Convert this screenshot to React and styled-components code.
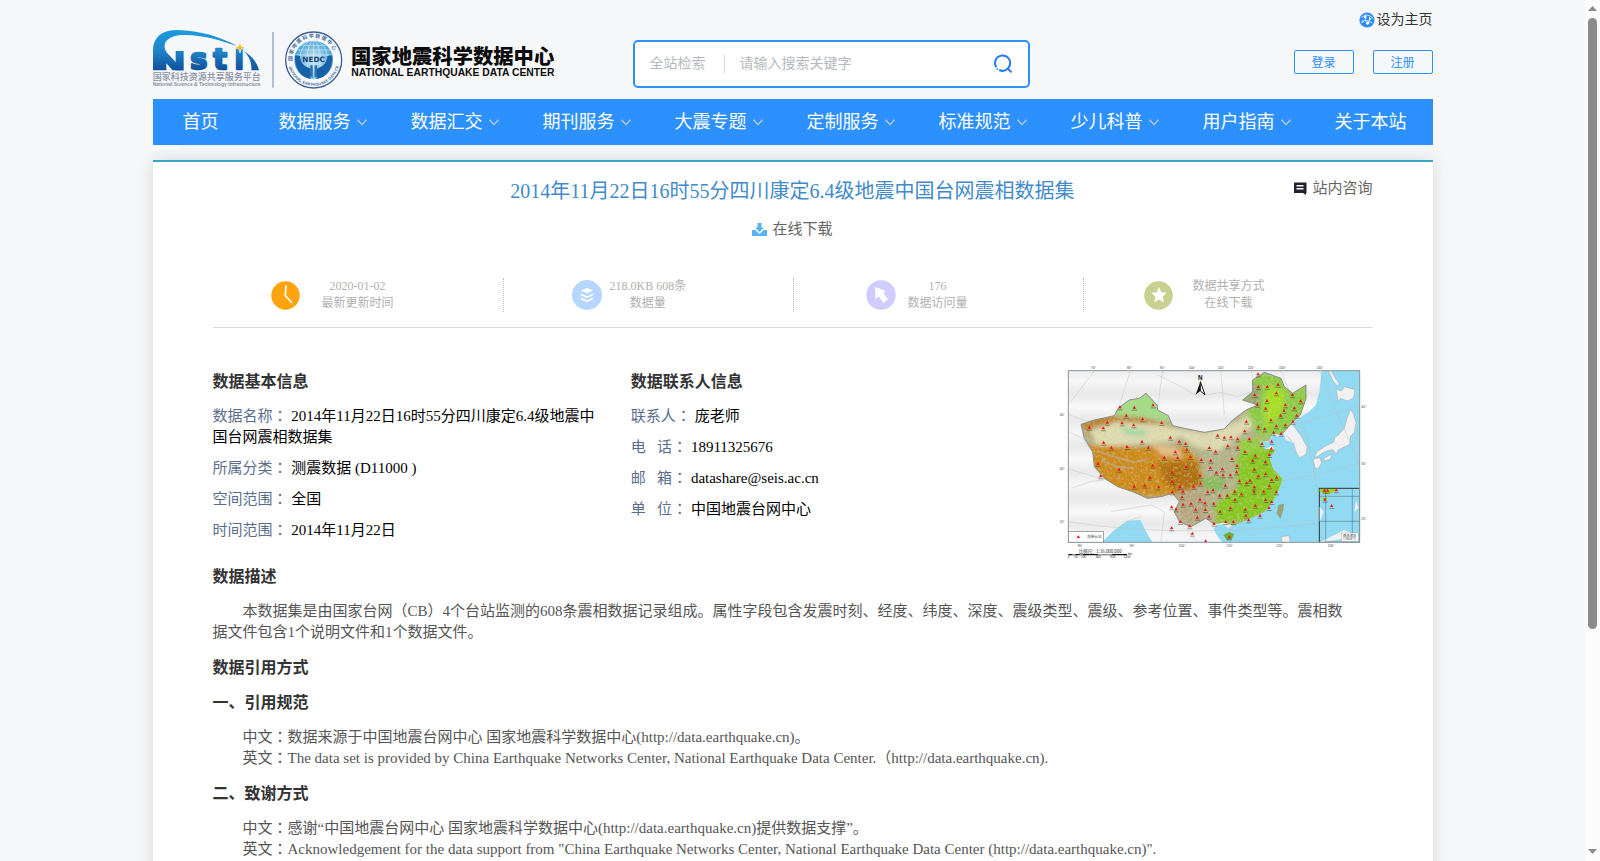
import React from 'react';
import styled, { createGlobalStyle } from 'styled-components';

const GlobalStyle = createGlobalStyle`
  * {
    box-sizing: border-box;
  }

  body {
    margin: 0;
    font-family: "Liberation Serif", "Noto Sans CJK SC", serif;
    font-size: 15px;
    line-height: 21px;
    color: #555;
    background-color: #f6f7f9;
  }
`;

const Page = styled.div`
  display: flex;
  height: 100vh;
  overflow: hidden;
`;

const Scroller = styled.div`
  flex: 1;
  overflow: hidden;
`;

const Container = styled.div`
  max-width: 1280px;
  margin: 0 auto;
`;

const ScrollBar = styled.div`
  width: 15px;
  padding: 0 3px;
  display: flex;
  flex-direction: column;
  align-items: center;
  background-color: #fcfcfc;
`;

const ScrollArrow = styled.svg`
  width: 9px;
  height: 18px;
  fill: #8b8b8b;
`;

const ScrollTrack = styled.div`
  flex: 1;
  width: 9px;
`;

const ScrollThumb = styled.div`
  height: 74%;
  border-radius: 5px;
  background-color: #8b8b8b;
`;

const Header = styled.header`
  display: grid;
  grid-template-columns: 480px 397px 1fr;
  align-items: start;
  height: 99px;
`;

const LogoLink = styled.a`
  display: block;
  margin-top: 29px;
`;

const LogoSvg = styled.svg`
  display: block;
  width: 402px;
  height: 60px;
`;

const SearchBox = styled.form`
  display: flex;
  align-items: center;
  height: 48px;
  margin-top: 40px;
  padding: 0 15px;
  border: 2px solid #2d90ff;
  border-radius: 5px;
  background-color: #fff;
`;

const SearchScope = styled.button`
  padding: 0 18px 0 0;
  border: 0;
  border-right: 1px solid #d5d8dc;
  background: none;
  color: #b5b9be;
  font-family: inherit;
  font-size: 14px;
  line-height: 18px;
`;

const SearchInput = styled.input`
  flex: 1;
  min-width: 0;
  padding: 0 15px;
  border: 0;
  outline: 0;
  background: none;
  font-family: inherit;
  font-size: 14px;
  line-height: 18px;

  &::placeholder {
    color: #b5b9be;
  }
`;

const SearchButton = styled.button`
  display: flex;
  padding: 0;
  border: 0;
  background: none;
`;

const UserArea = styled.div`
  display: flex;
  flex-direction: column;
  align-items: flex-end;
  gap: 20px;
  padding-top: 10px;
`;

const HomeLink = styled.a`
  display: flex;
  align-items: center;
  gap: 2px;
  color: #333;
  font-size: 14px;
  line-height: 20px;
  text-decoration: none;
`;

const UserButtons = styled.div`
  display: flex;
  gap: 19px;
`;

const UserButton = styled.button`
  width: 60px;
  height: 24px;
  padding: 0;
  border: 1px solid #2d90ff;
  border-radius: 2px;
  background: none;
  color: #2d90ff;
  font-family: inherit;
  font-size: 12px;
`;

const Nav = styled.nav`
  display: flex;
  height: 46px;
  background-color: #2d90ff;
`;

const NavItem = styled.a`
  display: flex;
  align-items: center;
  flex: none;
  gap: 6px;
  padding: 0 ${(p) => (p.$menu ? 14 : 30)}px 0 30px;
  color: #fff;
  font-size: 18px;
  text-decoration: none;
  white-space: nowrap;
`;

const SubMark = styled.div`
  width: 26px;
  height: 3px;
  margin: 2px 0 10px;
  background-color: #fff;
`;

const Card = styled.main`
  padding: 12px 60px 40px;
  border-top: 2px solid #3aa6c8;
  background-color: #fff;
  box-shadow: 0 0 16px rgba(0, 0, 0, 0.12);
`;

const TitleRow = styled.div`
  display: grid;
  grid-template-columns: 1fr auto 1fr;
`;

const Title = styled.h1`
  grid-column: 2;
  margin: 0;
  color: #428bca;
  font-size: 20px;
  font-weight: 400;
  line-height: 34px;
`;

const IconLink = styled.a`
  display: inline-flex;
  align-items: center;
  gap: 5px;
  color: #666;
  line-height: 28px;
  text-decoration: none;
`;

const AskLink = styled(IconLink)`
  justify-self: end;
  align-self: start;
`;

const DownloadRow = styled.div`
  display: flex;
  justify-content: center;
  margin-top: 7px;
`;

const Stats = styled.div`
  display: grid;
  grid-template-columns: repeat(4, 1fr);
  margin-top: 35px;
  padding-bottom: 15px;
  border-bottom: 1px solid #d9dcdd;
`;

const Stat = styled.div`
  display: flex;
  align-items: center;
  gap: ${(p) => p.$gap}px;
  height: 34px;
  padding-left: ${(p) => p.$left}px;

  & + & {
    border-left: 1px dotted #bbb;
  }
`;

const StatText = styled.div`
  color: #b0b0b0;
  font-size: 12px;
  line-height: 17px;
  text-align: center;
`;

const Info = styled.section`
  display: grid;
  grid-template-columns: 34% 1fr 308px;
  column-gap: 26px;
  margin-top: 37px;
  padding-right: 6px;
`;

const InfoColumn = styled.div`
  padding-top: 6px;
`;

const SectionTitle = styled.h2`
  margin: 0 0 14px;
  color: #333;
  font-size: 16px;
  font-weight: 700;
  line-height: 21px;
`;

const InfoRow = styled.p`
  margin: 0 0 10px;
  color: #000;
`;

const Label = styled.span`
  color: #5a6e8c;
  white-space: pre;
`;

const ColonMark = styled.span`
  font-family: "Noto Sans CJK JP", sans-serif;
  line-height: 1;
`;

const MapSvg = styled.svg`
  display: block;
  width: 308px;
  height: 195px;
`;

const Description = styled.section`
  margin-top: 6px;
`;

const Paragraph = styled.p`
  margin: 0 0 14px;
  text-indent: 2em;
`;

const Colon = () => <ColonMark>：</ColonMark>;

const navItems = [
  { text: '首页' },
  { text: '数据服务', menu: true },
  { text: '数据汇交', menu: true },
  { text: '期刊服务', menu: true },
  { text: '大震专题', menu: true },
  { text: '定制服务', menu: true },
  { text: '标准规范', menu: true },
  { text: '少儿科普', menu: true },
  { text: '用户指南', menu: true },
  { text: '关于本站' },
];

const basicInfo = [
  ['数据名称', '2014年11月22日16时55分四川康定6.4级地震中国台网震相数据集'],
  ['所属分类', '测震数据 (D11000 )'],
  ['空间范围', '全国'],
  ['时间范围', '2014年11月22日'],
];

const contactInfo = [
  ['联系人', '庞老师'],
  ['电   话', '18911325676'],
  ['邮   箱', 'datashare@seis.ac.cn'],
  ['单   位', '中国地震台网中心'],
];

const stations = [
  [621, 57], [622, 95], [649, 95], [681, 88], [611, 119], [676, 114], [724, 119], [648, 137], [619, 148], [749, 138],
  [644, 160], [703, 150], [730, 159], [699, 166], [689, 181], [737, 181], [660, 195], [726, 199], [703, 210], [676, 213],
  [622, 216], [641, 222], [668, 232], [690, 235], [586, 199], [581, 228], [207, 156], [250, 157], [306, 150], [226, 181],
  [169, 202], [115, 217], [157, 219], [213, 204], [248, 210], [275, 192], [332, 203], [158, 262], [181, 277], [228, 275],
  [273, 259], [292, 277], [358, 247], [385, 259], [404, 266], [407, 283], [373, 291], [340, 307], [380, 308], [418, 305],
  [451, 314], [479, 316], [475, 278], [494, 289], [500, 241], [520, 247], [540, 246], [560, 252], [530, 273], [560, 277],
  [595, 252], [582, 290], [543, 311], [558, 332], [613, 301], [605, 316], [643, 321], [655, 299], [661, 280], [662, 259],
  [633, 266], [141, 326], [149, 363], [204, 343], [305, 331], [297, 367], [281, 391], [250, 394], [323, 396], [363, 352],
  [363, 379], [405, 335], [447, 361], [478, 338], [514, 342], [496, 352], [516, 360], [538, 360], [557, 351], [565, 378],
  [587, 384], [597, 376], [610, 343], [622, 363], [644, 357], [662, 374], [677, 367], [655, 393], [610, 396], [609, 409],
  [638, 409], [676, 411], [551, 409], [571, 417], [523, 391], [529, 421], [506, 421], [486, 405], [470, 411], [449, 385],
  [428, 394], [387, 395], [396, 409], [364, 411], [393, 426], [396, 448], [375, 462], [362, 456], [420, 445], [434, 463],
  [447, 433], [462, 444], [463, 464], [488, 445], [507, 469], [538, 459], [552, 433], [583, 463], [613, 451], [644, 434],
  [662, 440], [654, 458], [627, 481], [593, 495], [585, 481], [547, 500], [524, 500], [489, 505], [474, 484], [439, 487],
  [388, 500], [416, 513], [362, 519], [424, 535], [464, 558], [535, 546], [820, 406], [830, 406], [856, 405], [822, 433],
  [842, 452],
];

const Chevron = () => (
  <svg width="10" height="7" viewBox="0 0 10 7" fill="none" stroke="#c3c9d2" strokeWidth="1.3">
    <path d="M0.5 0.7 L5 5.6 L9.5 0.7" />
  </svg>
);

const SearchIcon = () => (
  <svg width="20" height="20" viewBox="0 0 20 20" fill="none" stroke="#1f7bff" strokeWidth="2">
    <path d="M3.2 13.2 A7.6 7.6 0 1 1 15.2 14.2 A7.6 7.6 0 0 1 6.2 16" />
    <path d="M14.6 14.4 L18.6 18.4" />
    <path d="M3.6 14.2 L5.2 15.6" strokeWidth="1.2" />
  </svg>
);

const GlobeIcon = () => (
  <svg width="16" height="16" viewBox="0 0 16 16">
    <circle cx="8" cy="8" r="7.6" fill="#2d8ef7" />
    <g fill="none" stroke="#d9ecff" strokeWidth="0.9">
      <path d="M2.5 5.5 Q6 2 9 3.2 T14 6" />
      <path d="M6.5 2.5 Q5 8 8.5 12.5 Q11 9 10.5 5" />
      <path d="M2.5 10.5 Q6 7.5 8 8.5 T13.5 11" />
    </g>
    <g fill="#fff">
      <circle cx="6.3" cy="5" r="1.3" />
      <circle cx="8.6" cy="11.2" r="1.4" />
      <circle cx="11.2" cy="7" r="1" />
      <circle cx="3.6" cy="9.4" r="0.9" />
    </g>
  </svg>
);

const CommentIcon = () => (
  <svg width="13" height="13" viewBox="0 0 13 13">
    <path d="M0 0.5 H12.5 V11 H12 V13 L9 11 H0 Z" fill="#23232f" />
    <path d="M2.5 3.8 H9.5 M2.5 6.8 H9.5" stroke="#fff" strokeWidth="1.4" />
  </svg>
);

const DownloadIcon = () => (
  <svg width="15" height="13" viewBox="0 0 15 13" fill="#56b4f7">
    <path d="M5.5 0 H9.5 V4.5 H12 L7.5 9 L3 4.5 H5.5 Z" />
    <path d="M0 7 H3.4 L7.5 11 L11.6 7 H15 V13 H0 Z" />
  </svg>
);

const ClockIcon = () => (
  <svg width="29" height="29" viewBox="0 0 29 29">
    <circle cx="14.5" cy="14.5" r="14.2" fill="#ffa30f" />
    <path d="M15 4.5 L14.3 14.6 L21 22" fill="none" stroke="#fff" strokeWidth="1.7" />
  </svg>
);

const LayersIcon = () => (
  <svg width="30" height="30" viewBox="0 0 30 30">
    <circle cx="15" cy="15" r="15" fill="#b5d6ff" />
    <path d="M9 10.5 L15 8 L21 10.5 L15 13.5 Z" fill="#fff" />
    <path d="M9 14.5 L15 17.3 L21 14.5 M9 18.5 L15 21.3 L21 18.5" fill="none" stroke="#fff" strokeWidth="1.9" />
  </svg>
);

const CursorIcon = () => (
  <svg width="30" height="30" viewBox="0 0 30 30">
    <circle cx="15" cy="15" r="14.7" fill="#cfccff" />
    <path d="M9 7 L20 11 L17.3 13 L22 19.5 L17.5 23 L12.8 16.5 L9.5 19 Z" fill="#fff" />
  </svg>
);

const StarIcon = () => (
  <svg width="29" height="29" viewBox="0 0 29 29">
    <circle cx="14.5" cy="14.5" r="14.3" fill="#c8d18f" />
    <path d="M15 6 L17.3 11.2 L22.7 11.8 L18.7 15.6 L19.8 21.4 L15 18.6 L10.2 21.4 L11.3 15.6 L7.3 11.8 L12.7 11.2 Z" fill="#fff" />
  </svg>
);

const Logo = () => (
  <LogoSvg viewBox="39 57 1206 180">
    <defs>
      <linearGradient id="brand" gradientUnits="userSpaceOnUse" x1="0" y1="60" x2="0" y2="182">
        <stop offset="0" stopColor="#1c9be0" />
        <stop offset="0.5" stopColor="#1f86c8" />
        <stop offset="1" stopColor="#104f9b" />
      </linearGradient>
      <radialGradient id="globe">
        <stop offset="0" stopColor="#d5eef9" />
        <stop offset="1" stopColor="#4aa5d6" />
      </radialGradient>
      <path id="ringTop" d="M 458 158 A 64 64 0 1 1 584 158" />
      <path id="ringBottom" d="M 446 168 A 77 77 0 0 0 596 168" />
    </defs>

    <g fill="url(#brand)">
      <path d="M39 181 V118 C41 80 66 60 112 60 C180 61 245 82 291 108 C235 88 168 70 116 76 C76 82 64 106 82 130 L131 181 H98 L79 160 V181 Z" />
      <rect x="107" y="123" width="24" height="58" />
      <path d="M312 124 C334 136 351 156 357 181 H334 C336 160 328 140 312 124 Z" />
      <g fontFamily="DejaVu Sans" fontWeight="700" fontSize="86" stroke="url(#brand)" strokeWidth="7" strokeLinejoin="round">
        <text x="151" y="178">s</text>
        <text x="220" y="178">t</text>
        <text x="284" y="178" fontSize="78">i</text>
      </g>
    </g>
    <path d="M300 97 L304 109 L316 113 L304 117 L300 129 L296 117 L284 113 L296 109 Z" fill="#f3bd1c" stroke="#f6f7f9" strokeWidth="2" />
    <text x="38" y="210" fill="#8990a3" fontFamily="Noto Sans CJK SC" fontWeight="500" fontSize="27">国家科技资源共享服务平台</text>
    <text x="38" y="227" fill="#8990a3" fontFamily="Liberation Sans" fontWeight="700" fontSize="15">National Science &amp; Technology Infrastructure</text>
    <rect x="396" y="66" width="6" height="167" fill="#b0bfd3" />

    <circle cx="521" cy="150" r="84" fill="#f8fbfd" stroke="#3d5f94" strokeWidth="4" />
    <circle cx="521" cy="150" r="58" fill="url(#globe)" />
    <g fill="none" stroke="#eaf6fc" strokeWidth="1.5">
      <ellipse cx="521" cy="150" rx="20" ry="58" />
      <ellipse cx="521" cy="150" rx="42" ry="58" />
      <path d="M471 120 H571 M464 135 H578 M482 106 H560 M521 92 V208" />
    </g>
    <path d="M465 136 C463 180 485 203 512 207 V176 C492 170 482 160 480 138 Z M577 136 C579 180 557 203 530 207 V176 C550 170 560 160 562 138 Z" fill="#1a60a8" />
    <path d="M511 166 H518 V200 H511 Z M524 166 H531 V200 H524 Z" fill="#2a6fb0" />
    <text x="521" y="155" textAnchor="middle" fill="#143a75" fontFamily="DejaVu Sans" fontWeight="700" fontSize="22">NEDC</text>
    <text fill="#4a6a9c" fontFamily="Noto Sans CJK SC" fontWeight="700" fontSize="15">
      <textPath href="#ringTop" startOffset="5">国 家 地 震 科 学 数 据 中 心</textPath>
    </text>
    <text fill="#4a6a9c" fontFamily="Liberation Sans" fontWeight="700" fontSize="12">
      <textPath href="#ringBottom" startOffset="3">NATIONAL EARTHQUAKE DATA CENTER</textPath>
    </text>

    <text x="633" y="162" fill="#0c0c0c" fontFamily="Noto Sans CJK SC" fontWeight="900" fontSize="61">国家地震科学数据中心</text>
    <text x="634" y="199" fill="#0c0c0c" fontFamily="Liberation Sans" fontWeight="700" fontSize="31">NATIONAL EARTHQUAKE DATA CENTER</text>
  </LogoSvg>
);

const ChinaMap = () => (
  <MapSvg viewBox="24 30 924 585">
    <defs>
      <linearGradient id="haze" x1="0" y1="0" x2="0" y2="78" gradientUnits="userSpaceOnUse" spreadMethod="reflect">
        <stop offset="0" stopColor="#f9f9f9" />
        <stop offset="0.5" stopColor="#e9e9e9" />
        <stop offset="1" stopColor="#f7f7f7" />
      </linearGradient>
      <clipPath id="frame">
        <rect x="52" y="47" width="874" height="515" />
      </clipPath>
      <clipPath id="country">
        <path d="M90 208 L130 195 L190 182 L203 158 L235 135 L265 130 L285 115 L318 150 L320 165 L352 182 L365 212 L410 222 L460 232 L520 222 L545 195 L585 165 L620 150 L575 135 L605 110 L605 75 L640 52 L690 70 L700 95 L725 115 L765 90 L765 130 L748 180 L722 205 L690 240 L665 235 L655 257 L625 260 L640 282 L674 284 L655 307 L665 340 L694 372 L685 400 L665 440 L640 470 L590 495 L545 512 L520 502 L490 508 L465 490 L420 515 L385 500 L370 470 L385 440 L365 415 L330 425 L290 430 L245 410 L200 395 L160 370 L130 335 L125 290 L100 250 Z" />
      </clipPath>
      <filter id="soft" x="-10%" y="-10%" width="120%" height="120%">
        <feGaussianBlur stdDeviation="6" />
      </filter>
      <filter id="grain" x="0" y="0" width="100%" height="100%">
        <feTurbulence type="fractalNoise" baseFrequency="0.12" numOctaves="3" seed="4" />
        <feColorMatrix values="0 0 0 0 0.62  0 0 0 0 0.58  0 0 0 0 0.56  3 0 0 0 -1.4" />
      </filter>
    </defs>

    <g clipPath="url(#frame)">
      <rect x="52" y="47" width="874" height="515" fill="url(#haze)" />
      <path d="M812 47 L805 110 L795 150 L772 172 L735 195 L722 215 L748 240 L768 275 L765 298 L745 308 L735 290 L728 265 L705 255 L698 235 L680 245 L668 235 L655 257 L625 262 L622 270 L640 284 L660 272 L674 284 L655 307 L665 340 L694 372 L685 400 L665 440 L640 470 L590 495 L545 510 L532 520 L515 508 L498 510 L488 522 L500 545 L515 562 H926 V47 Z" fill="#92d9f2" />
      <path d="M152 562 L190 525 L228 498 L268 494 L285 530 L305 562 Z" fill="#92d9f2" />
      <g fill="#f1f1f1" stroke="#a5a5a5" strokeWidth="1.5">
        <path d="M898 165 L906 172 L915 205 L910 232 L898 245 L896 268 L880 276 L862 284 L856 296 L845 284 L820 290 L800 304 L790 306 L798 290 L825 272 L848 262 L852 246 L862 240 L880 220 L888 190 Z" />
        <path d="M855 102 L872 108 L880 95 L912 104 L908 128 L890 138 L868 130 L862 140 Z" />
        <path d="M786 312 L806 308 L812 322 L802 342 L792 338 Z" />
        <path d="M818 310 L842 298 L838 312 L822 318 Z" />
        <path d="M690 545 L714 542 L718 562 H694 Z" />
        <path d="M840 47 L852 68 L866 88 L858 92 L846 78 L832 47 Z" />
        <path d="M722 205 L748 240 L768 275 L765 298 L745 308 L735 290 L728 265 L705 240" />
      </g>
      <g fill="none" stroke="#b9bfc2" strokeWidth="1.3">
        <path d="M130 47 L60 140 M238 47 L150 330 M335 47 L300 300 M510 47 L520 180 M600 47 L640 200 M690 47 L770 250 L830 562 M805 47 L926 330" />
        <path d="M52 178 Q420 330 926 150 M52 342 Q420 470 926 325 M52 500 Q420 560 926 490" />
        <path d="M320 60 L360 80 L400 100 L440 125 L510 112 L560 125 L600 110" />
        <path d="M52 230 L95 250 L130 300 M60 400 L120 380 L160 375 M180 470 L300 450 L340 470 L330 560 M400 520 L440 562 M225 500 L270 485" />
      </g>
      <g clipPath="url(#country)">
        <rect x="52" y="47" width="740" height="515" fill="#b4b388" />
        <g filter="url(#soft)">
          <path d="M60 180 L260 185 L370 215 L330 240 L130 255 Z" fill="#b98532" />
          <path d="M180 180 L240 120 L330 110 L360 200 L300 190 Z" fill="#a3dd83" />
          <path d="M115 225 L200 200 L340 210 L410 235 L360 260 L230 270 L140 275 Z" fill="#e0dcae" />
          <path d="M205 215 L290 225 L280 245 L225 240 Z" fill="#a5d8a0" />
          <path d="M350 215 L460 235 L560 200 L620 160 L625 200 L570 240 L500 290 L430 275 Z" fill="#dfdbb0" />
          <path d="M100 270 L270 275 L400 275 L440 310 L455 380 L400 420 L280 425 L170 400 L110 320 Z" fill="#cd8a16" />
          <path d="M320 320 L440 320 L450 390 L380 410 L340 380 Z" fill="#b0700f" />
          <path d="M300 265 L380 280 L400 310 L330 300 Z" fill="#e5bd83" />
          <path d="M380 410 L470 400 L470 500 L390 500 Z" fill="#b5a77f" />
          <path d="M445 370 L520 365 L520 400 L470 410 Z" fill="#84bb58" />
          <path d="M560 300 L620 260 L680 280 L710 380 L660 480 L500 510 L490 450 L560 400 Z" fill="#86c91b" />
          <path d="M560 255 L640 250 L640 290 L570 300 Z" fill="#93cf35" />
          <path d="M600 50 L700 60 L780 90 L760 180 L680 250 L620 240 L570 140 Z" fill="#8ccc3f" />
          <path d="M650 90 L700 110 L700 160 L650 225 L635 160 Z" fill="#a6e01f" />
          <path d="M590 90 L630 90 L625 160 L580 145 Z" fill="#94a868" />
        </g>
        <path d="M135 288 L200 308 L250 322 L290 312 M150 315 L200 335 L250 340" fill="none" stroke="#b7ab9d" strokeWidth="6" opacity="0.6" />
        <rect x="80" y="47" width="700" height="475" filter="url(#grain)" opacity="0.5" />
      </g>
      <path d="M90 208 L130 195 L190 182 L203 158 L235 135 L265 130 L285 115 L318 150 L320 165 L352 182 L365 212 L410 222 L460 232 L520 222 L545 195 L585 165 L620 150 L575 135 L605 110 L605 75 L640 52 L690 70 L700 95 L725 115 L765 90 L765 130 L748 180 L722 205 L690 240 M90 208 L100 250 L125 290 L130 335 L160 370 L200 395 L245 410 L290 430 L330 425 L365 415 L385 440 L370 470 L385 500 L420 515 L465 490 L490 508" fill="none" stroke="#8d8d8d" strokeWidth="3" />
      <path d="M683 450 L698 447 L696 465 L688 490 L678 475 Z" fill="#9aa56e" stroke="#888" />
      <path d="M518 540 L535 531 L549 538 L542 552 L528 555 Z" fill="#6fae28" stroke="#888" />

      <rect x="52" y="529" width="105" height="33" fill="#fff" stroke="#777" strokeWidth="2" />
      <text x="108" y="549" fontFamily="Noto Sans CJK SC" fontSize="11" fill="#555">测震台站</text>

      <rect x="805" y="400" width="121" height="162" fill="#92d9f2" stroke="#333" strokeWidth="3" />
      <path d="M806 402 H860 L848 412 L825 418 L806 410 Z M813 430 L828 425 L826 437 L815 436 Z" fill="#9fd41c" />
      <path d="M806 455 L818 470 L806 500 M915 435 L922 460 L910 470 Z M806 562 L880 525 L926 545" fill="#f1f1f1" />
      <path d="M805 499 H926 M824 400 V562 M904 400 V562 M805 424 H926" stroke="#456" strokeWidth="1.3" />
      <rect x="872" y="534" width="50" height="25" fill="#fff" stroke="#888" />
      <text x="876" y="545" fontFamily="Noto Sans CJK SC" fontSize="10" fill="#444">南海诸岛</text>
      <text x="876" y="556" fontFamily="Liberation Sans" fontSize="8" fill="#444">1:38000万</text>

      {stations.map(([x, y]) => (
        <g key={`${x}-${y}`}>
          <path d={`M${x - 5} ${y + 4} L${x} ${y - 5} L${x + 5} ${y + 4} Z`} fill="#ee1111" />
          <rect x={x - 7} y={y + 7} width="15" height="3" fill="#333" opacity="0.45" />
        </g>
      ))}
      <path d="M77 549 L82 541 L87 549 Z" fill="#ee1111" />
    </g>
    <rect x="52" y="47" width="874" height="515" fill="none" stroke="#8a9298" strokeWidth="3" />

    <text x="441" y="75" fontFamily="Liberation Sans" fontWeight="700" fontSize="19" fill="#111">N</text>
    <path d="M448 80 L434 119 L448 108 Z" fill="#111" />
    <path d="M448 80 L462 119 L448 108 Z" fill="#fff" stroke="#111" strokeWidth="3" />

    <g fontFamily="Liberation Sans" fontSize="10" fill="#444">
      <text x="120" y="42">70°</text>
      <text x="228" y="42">80°</text>
      <text x="326" y="42">90°</text>
      <text x="413" y="42">100°</text>
      <text x="500" y="42">110°</text>
      <text x="590" y="42">120°</text>
      <text x="684" y="42">130°</text>
      <text x="796" y="42">140°</text>
      <text x="80" y="577">80°</text>
      <text x="236" y="577">90°</text>
      <text x="383" y="577">100°</text>
      <text x="526" y="577">110°</text>
      <text x="676" y="577">120°</text>
      <text x="830" y="577">130°</text>
      <text x="26" y="182">40°</text>
      <text x="26" y="346">30°</text>
      <text x="26" y="503">20°</text>
      <text x="931" y="160">40°</text>
      <text x="931" y="331">30°</text>
      <text x="931" y="494">20°</text>
    </g>
    <text x="84" y="593" fontFamily="Noto Sans CJK SC" fontSize="13" fill="#222">比例尺：1:16,000,000</text>
    <path d="M52 599 H228" stroke="#111" strokeWidth="4" />
    <path d="M64 599 H74 M86 599 H96 M140 599 H184" stroke="#fff" strokeWidth="2" />
    <g fontFamily="Liberation Sans" fontSize="9" fill="#222">
      <text x="50" y="609">0</text>
      <text x="70" y="609">50</text>
      <text x="90" y="609">100</text>
      <text x="134" y="609">400</text>
      <text x="178" y="609">800</text>
      <text x="218" y="609">1200</text>
      <text x="231" y="600">km</text>
    </g>
  </MapSvg>
);

const App = () => {
  return (
    <Page>
      <GlobalStyle />
      <Scroller>
        <Container>
          <Header>
            <LogoLink href="#" aria-label="国家地震科学数据中心">
              <Logo />
            </LogoLink>
            <SearchBox onSubmit={(e) => e.preventDefault()}>
              <SearchScope type="button">全站检索</SearchScope>
              <SearchInput type="text" placeholder="请输入搜索关键字" aria-label="请输入搜索关键字" />
              <SearchButton type="submit" aria-label="检索">
                <SearchIcon />
              </SearchButton>
            </SearchBox>
            <UserArea>
              <HomeLink href="#">
                <GlobeIcon />
                设为主页
              </HomeLink>
              <UserButtons>
                <UserButton type="button">登录</UserButton>
                <UserButton type="button">注册</UserButton>
              </UserButtons>
            </UserArea>
          </Header>

          <Nav>
            {navItems.map((item) => (
              <NavItem key={item.text} href="#" $menu={item.menu}>
                {item.text}
                {item.menu && <Chevron />}
              </NavItem>
            ))}
          </Nav>
          <SubMark />

          <Card>
            <TitleRow>
              <Title>2014年11月22日16时55分四川康定6.4级地震中国台网震相数据集</Title>
              <AskLink href="#">
                <CommentIcon />
                站内咨询
              </AskLink>
            </TitleRow>
            <DownloadRow>
              <IconLink href="#">
                <DownloadIcon />
                在线下载
              </IconLink>
            </DownloadRow>

            <Stats>
              <Stat $left={58} $gap={22}>
                <ClockIcon />
                <StatText>2020-01-02<br />最新更新时间</StatText>
              </Stat>
              <Stat $left={68} $gap={8}>
                <LayersIcon />
                <StatText>218.0KB 608条<br />数据量</StatText>
              </Stat>
              <Stat $left={72} $gap={12}>
                <CursorIcon />
                <StatText>176<br />数据访问量</StatText>
              </Stat>
              <Stat $left={60} $gap={20}>
                <StarIcon />
                <StatText>数据共享方式<br />在线下载</StatText>
              </Stat>
            </Stats>

            <Info>
              <InfoColumn>
                <SectionTitle>数据基本信息</SectionTitle>
                {basicInfo.map(([label, value]) => (
                  <InfoRow key={label}>
                    <Label>{label}<Colon /></Label> {value}
                  </InfoRow>
                ))}
              </InfoColumn>
              <InfoColumn>
                <SectionTitle>数据联系人信息</SectionTitle>
                {contactInfo.map(([label, value]) => (
                  <InfoRow key={label}>
                    <Label>{label}<Colon /></Label> {value}
                  </InfoRow>
                ))}
              </InfoColumn>
              <ChinaMap />
            </Info>

            <Description>
              <SectionTitle>数据描述</SectionTitle>
              <Paragraph>
                本数据集是由国家台网（CB）4个台站监测的608条震相数据记录组成。属性字段包含发震时刻、经度、纬度、深度、震级类型、震级、参考位置、事件类型等。震相数
                <br />
                据文件包含1个说明文件和1个数据文件。
              </Paragraph>
              <SectionTitle>数据引用方式</SectionTitle>
              <SectionTitle>一、引用规范</SectionTitle>
              <Paragraph as="div">
                <div>中文<Colon />数据来源于中国地震台网中心 国家地震科学数据中心(http://data.earthquake.cn)。</div>
                <div>英文<Colon />The data set is provided by China Earthquake Networks Center, National Earthquake Data Center.（http://data.earthquake.cn).</div>
              </Paragraph>
              <SectionTitle>二、致谢方式</SectionTitle>
              <Paragraph as="div">
                <div>中文<Colon />感谢“中国地震台网中心 国家地震科学数据中心(http://data.earthquake.cn)提供数据支撑”。</div>
                <div>英文<Colon />Acknowledgement for the data support from "China Earthquake Networks Center, National Earthquake Data Center (http://data.earthquake.cn)".</div>
              </Paragraph>
            </Description>
          </Card>
        </Container>
      </Scroller>

      <ScrollBar aria-hidden="true">
        <ScrollArrow viewBox="0 0 9 18">
          <path d="M4.5 6 L9 11 H0 Z" />
        </ScrollArrow>
        <ScrollTrack>
          <ScrollThumb />
        </ScrollTrack>
        <ScrollArrow viewBox="0 0 9 18">
          <path d="M4.5 11 L9 6 H0 Z" />
        </ScrollArrow>
      </ScrollBar>
    </Page>
  );
};

export default App;
